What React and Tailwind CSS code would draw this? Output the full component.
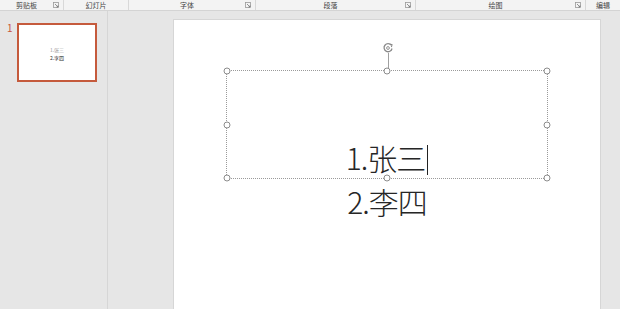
import React from 'react';

const cjk = { fontFamily: '"Noto Sans CJK SC", "Microsoft YaHei", sans-serif' };

const groups = [
  { label: '剪贴板', width: 'w-[64px]', launcher: true },
  { label: '幻灯片', width: 'w-[65px]', launcher: false },
  { label: '字体', width: 'w-[127px]', launcher: true },
  { label: '段落', width: 'w-[160px]', launcher: true },
  { label: '绘图', width: 'w-[170px]', launcher: true },
  { label: '编辑', width: 'flex-1', launcher: false, last: true },
];

const Launcher = () => (
  <svg width="6" height="6" viewBox="0 0 6 6" className="mr-[4px] shrink-0">
    <rect x="0.5" y="0.5" width="5" height="5" fill="none" stroke="#9a9a9a" strokeWidth="0.8" />
    <path d="M2 2 L5 5 M3.5 5 H5 V3.5" stroke="#777" strokeWidth="0.8" fill="none" />
  </svg>
);

const Handle = ({ className }) => (
  <span
    className={`absolute w-[7px] h-[7px] rounded-full border border-[#8c8c8c] bg-white -translate-x-1/2 -translate-y-1/2 ${className}`}
  />
);

const RotateIcon = () => (
  <svg width="12" height="12" viewBox="0 0 12 12">
    <path d="M9.2 3.2 A4 4 0 1 0 10 6.5" fill="none" stroke="#8a8a8a" strokeWidth="1.3" />
    <path d="M7.5 2 L10 2.6 L9.4 5" fill="none" stroke="#8a8a8a" strokeWidth="1.1" />
    <circle cx="6" cy="6" r="1.4" fill="none" stroke="#8a8a8a" strokeWidth="0.9" />
  </svg>
);

const App = () => {
  return (
    <div className="w-[620px] h-[309px] overflow-hidden flex flex-col bg-[#e6e6e6]" style={cjk}>
      {/* 功能区分组标签 */}
      <div className="h-[11px] flex bg-[#f3f3f3] border-b border-[#d4d4d4] shrink-0">
        {groups.map((g) => (
          <div
            key={g.label}
            className={`${g.width} flex items-center h-full ${g.last ? '' : 'border-r border-[#d8d8d8]'}`}
          >
            <span className="flex-1 text-center text-[7px] leading-none text-[#444]">{g.label}</span>
            {g.launcher && <Launcher />}
          </div>
        ))}
      </div>

      <div className="flex flex-1 min-h-0">
        {/* 缩略图 */}
        <div className="w-[108px] shrink-0 border-r border-[#d6d6d6] flex pt-[12px] pl-[7px]">
          <span className="text-[10px] leading-none text-[#c9583a] w-[10px]">1</span>
          <div className="w-[80px] h-[59px] border-2 border-[#c55a3c] bg-white flex flex-col items-center justify-center">
            <div className="text-[5px] leading-[8px] text-[#9a9a9a] mt-[2px]">1.张三</div>
            <div className="text-[5px] leading-[8px] text-[#333]">2.李四</div>
          </div>
        </div>

        {/* 编辑区 */}
        <div className="flex-1 pt-[8px] pl-[65px] pr-[19px]">
          <div className="relative w-[428px] h-[300px] bg-white border border-[#d6d6d6]">
            {/* 旋转柄 */}
            <div className="absolute left-[208px] top-[22px] flex flex-col items-center">
              <RotateIcon />
              <div className="w-px h-[16px] bg-[#a0a0a0] -mt-[1px]" />
            </div>

            {/* 文本框 */}
            <div className="absolute left-[52px] top-[50px] w-[322px] h-[109px] border border-dotted border-[#9a9a9a]">
              <div className="pt-[64px] text-center text-[30px] leading-[44px] tracking-[-1px] font-light text-[#262626]">
                <div>
                  1.张三
                  <span className="inline-block w-px h-[30px] bg-[#222] align-[-5px] ml-[2px]" />
                </div>
                <div>2.李四</div>
              </div>
              <Handle className="left-0 top-0" />
              <Handle className="left-1/2 top-0" />
              <Handle className="left-full top-0" />
              <Handle className="left-0 top-1/2" />
              <Handle className="left-full top-1/2" />
              <Handle className="left-0 top-full" />
              <Handle className="left-1/2 top-full" />
              <Handle className="left-full top-full" />
            </div>
          </div>
        </div>
      </div>
    </div>
  );
};

export default App;
